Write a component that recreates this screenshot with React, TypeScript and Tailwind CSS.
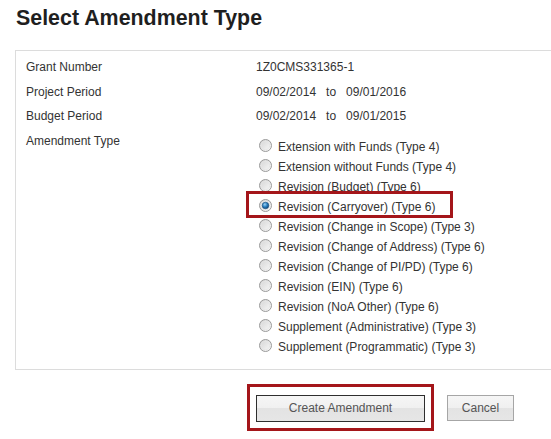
import React, { useState } from 'react';

const options = [
  'Extension with Funds (Type 4)',
  'Extension without Funds (Type 4)',
  'Revision (Budget) (Type 6)',
  'Revision (Carryover) (Type 6)',
  'Revision (Change in Scope) (Type 3)',
  'Revision (Change of Address) (Type 6)',
  'Revision (Change of PI/PD) (Type 6)',
  'Revision (EIN) (Type 6)',
  'Revision (NoA Other) (Type 6)',
  'Supplement (Administrative) (Type 3)',
  'Supplement (Programmatic) (Type 3)',
];

const Radio: React.FC<{ checked: boolean }> = ({ checked }) => (
  <svg width="13" height="13" viewBox="0 0 13 13" className="shrink-0 relative top-[-1px]">
    <defs>
      <linearGradient id="rb" x1="0" y1="0" x2="1" y2="1">
        <stop offset="0" stopColor="#d2d2d2" />
        <stop offset="1" stopColor="#fbfbfb" />
      </linearGradient>
      <radialGradient id="dot" cx="0.4" cy="0.35" r="0.7">
        <stop offset="0" stopColor="#9fd3f5" />
        <stop offset="0.5" stopColor="#2a7fc0" />
        <stop offset="1" stopColor="#0d3f6e" />
      </radialGradient>
    </defs>
    <circle cx="6.5" cy="6.5" r="6" fill="url(#rb)" stroke="#9a9a9a" strokeWidth="1" />
    <circle cx="6.5" cy="6.5" r="4.2" fill="none" stroke="#e4e4e4" strokeWidth="0.8" />
    {checked && <circle cx="6.5" cy="6.5" r="3.3" fill="url(#dot)" stroke="#1b4f7e" strokeWidth="0.6" />}
  </svg>
);

const InfoRow: React.FC<{ label: string; children: React.ReactNode }> = ({ label, children }) => (
  <div className="flex leading-[24.5px]">
    <div className="w-[230px]">{label}</div>
    <div>{children}</div>
  </div>
);

export default function App() {
  const [selected, setSelected] = useState(3);

  return (
    <div
      className="w-[551px] h-[439px] overflow-hidden bg-white text-[#333] text-[12px]"
      style={{ fontFamily: '"Liberation Sans", Arial, sans-serif' }}
    >
      <h1 className="pt-[6px] pl-[16px] text-[21.4px] leading-[24px] font-bold text-[#1f1f1f]">
        Select Amendment Type
      </h1>

      <div className="mt-[20px] ml-[15px] w-[560px] border border-[#dcdcdc] pt-[4px] pb-[12px] pl-[10px]">
        <InfoRow label="Grant Number">1Z0CMS331365-1</InfoRow>
        <InfoRow label="Project Period">
          09/02/2014&nbsp;&nbsp; to &nbsp;&nbsp;09/01/2016
        </InfoRow>
        <InfoRow label="Budget Period">
          09/02/2014&nbsp;&nbsp; to &nbsp;&nbsp;09/01/2015
        </InfoRow>
        <div className="flex leading-[24.5px]">
          <div className="w-[230px]">Amendment Type</div>
          <div className="pt-[8px]">
            {options.map((opt, i) => (
              <div
                key={opt}
                onClick={() => setSelected(i)}
                className="relative flex items-center h-[20px] leading-[20px] pl-[3px] gap-[6px] cursor-pointer"
              >
                {i === selected && (
                  <span className="absolute left-[-10px] w-[207px] top-[-6px] bottom-[-1px] border-[3px] border-[#a4161a]" />
                )}
                <Radio checked={i === selected} />
                <span>{opt}</span>
              </div>
            ))}
          </div>
        </div>
      </div>

      <div className="flex justify-end items-start pr-[37px] mt-[14px] gap-[13px]">
        <div className="border-[3px] border-[#a4161a] pt-[8px] pb-[6px] px-[6px] ml-[-2px]">
          <button className="w-[169px] h-[27px] border border-[#2e2e2e] bg-[linear-gradient(#f6f6f6_0%,#f0f0f0_50%,#e3e3e3_50%,#e6e6e6_100%)] text-[#555] text-[12px]">
            Create Amendment
          </button>
        </div>
        <button className="mt-[11px] w-[67px] h-[26px] border border-[#a6a6a6] bg-[linear-gradient(#f6f6f6_0%,#f0f0f0_50%,#e3e3e3_50%,#e6e6e6_100%)] text-[#555] text-[12px]">
          Cancel
        </button>
      </div>
    </div>
  );
}
